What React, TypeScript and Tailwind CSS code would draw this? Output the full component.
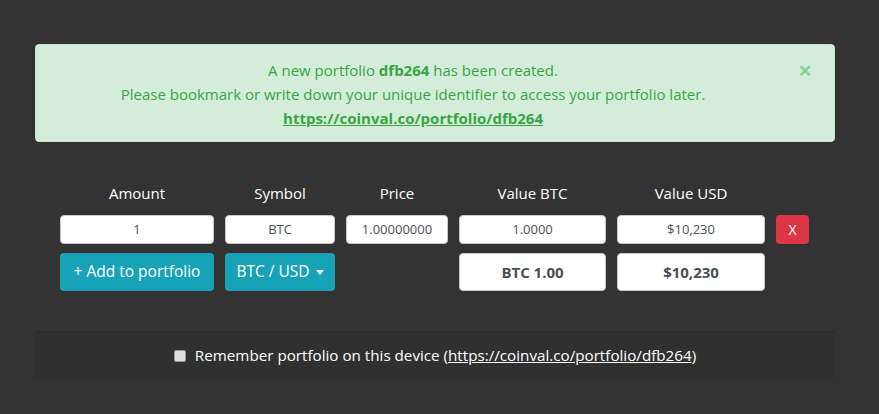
import React from "react";

const font = { fontFamily: '"Open Sans", "Noto Sans", sans-serif' };

const cols = "grid grid-cols-[154px_110px_102px_147px_148px_33px] gap-x-[11px]";

const Field = ({ value, bold }: { value: string; bold?: boolean }) => (
  <div
    className={`flex items-center justify-center bg-white border border-[#c8c8c8] rounded text-[#495057] ${
      bold ? "h-[38px] text-[15px] font-bold" : "h-[29px] text-[13px]"
    }`}
  >
    {value}
  </div>
);

export default function App() {
  return (
    <div className="min-h-screen w-full bg-[#333333] text-white" style={font}>
      <div className="w-[800px] ml-[35px] pt-[44px]">
        {/* Alert */}
        <div className="relative bg-[#d4edda] border border-[#c3e6cb] rounded text-[#38a541] text-[15px] leading-[24px] text-center pt-[13px] pb-[11px] pl-5 pr-16">
          <p>
            A new portfolio <strong>dfb264</strong> has been created.
          </p>
          <p>Please bookmark or write down your unique identifier to access your portfolio later.</p>
          <p>
            <a href="#" className="font-bold underline">
              https://coinval.co/portfolio/dfb264
            </a>
          </p>
          <span className="absolute right-[22px] top-[13px] text-[24px] leading-[24px] font-bold text-[#86cf96]">
            ×
          </span>
        </div>

        {/* Portfolio table */}
        <div className="pl-[25px] pt-[40px]">
          <div className={`${cols} text-[15px] leading-[22px] text-center`}>
            <div>Amount</div>
            <div>Symbol</div>
            <div>Price</div>
            <div>Value BTC</div>
            <div>Value USD</div>
            <div />
          </div>
          <div className={`${cols} mt-[11px]`}>
            <Field value="1" />
            <Field value="BTC" />
            <Field value="1.00000000" />
            <Field value="1.0000" />
            <Field value="$10,230" />
            <button className="h-[29px] rounded bg-[#dc3545] text-white text-[14px]">X</button>
          </div>
          <div className={`${cols} mt-[9px]`}>
            <button className="h-[38px] rounded bg-[#17a2b8] text-white text-[15.5px]">+ Add to portfolio</button>
            <button className="h-[38px] rounded bg-[#17a2b8] text-white text-[15.5px] flex items-center justify-center gap-[6px]">
              BTC / USD
              <span className="w-0 h-0 border-l-[4px] border-r-[4px] border-t-[5px] border-l-transparent border-r-transparent border-t-white" />
            </button>
            <div />
            <Field value="BTC 1.00" bold />
            <Field value="$10,230" bold />
            <div />
          </div>
        </div>

        {/* Footer */}
        <div className="mt-[40px] border-t border-[#2a2a2a] bg-[#303030] h-[48px] flex items-center justify-center gap-[9px] text-[15.2px]">
          <span className="w-[12px] h-[12px] rounded-[2px] bg-[#dedede] border border-[#999]" />
          <span>
            Remember portfolio on this device (
            <a href="#" className="underline">
              https://coinval.co/portfolio/dfb264
            </a>
            )
          </span>
        </div>
      </div>
    </div>
  );
}
